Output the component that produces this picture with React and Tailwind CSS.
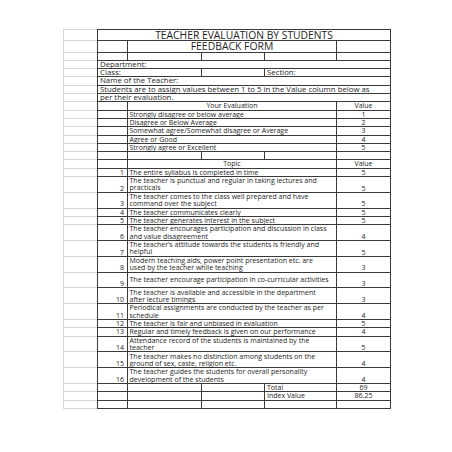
const items = [
  [1, ["The entire syllabus is completed in time"], 5],
  [2, ["The teacher is punctual and regular  in taking lectures and", "practicals"], 5],
  [3, ["The teacher comes to the class well prepared and have", "command over the subject"], 5],
  [4, ["The teacher communicates clearly"], 5],
  [5, ["The teacher generates interest in the subject"], 5],
  [6, ["The teacher encourages participation and discussion in class", "and value disagreement"], 4],
  [7, ["The teacher\u2019s attitude towards the students is friendly and", "helpful"], 5],
  [8, ["Modern teaching aids, power point presentation etc. are", "used by the teacher while teaching"], 3],
  [9, ["The teacher encourage participation in co-curricular activities"], 3, true],
  [10, ["The teacher is available and accessible in the department", "after lecture timings"], 3],
  [11, ["Periodical assignments are conducted by the teacher as per", "schedule"], 4],
  [12, ["The teacher is fair and unbiased in evaluation"], 5],
  [13, ["Regular and timely feedback is given on our performance"], 4],
  [14, ["Attendance record of the students is maintained by the", "teacher"], 5],
  [15, ["The teacher makes no distinction among students on the", "ground of sex, caste, religion etc."], 4],
  [16, ["The teacher guides the students for overall personality", "development of the students"], 4],
];

const scale = [
  ["Strongly disagree or below average", 1],
  ["Disagree or Below Average", 2],
  ["Somewhat agree/Somewhat disagree or Average", 3],
  ["Agree or Good", 4],
  ["Strongly agree or Excellent", 5],
];

// one spreadsheet row: light row-header cell + bordered table cells
function Row({ h, top, children }) {
  return (
    <div className={`flex shrink-0 ${h}`}>
      <div className={`w-[34px] shrink-0 border-l border-b border-[#d6d6d6] ${top ? "border-t" : ""}`} />
      <div className={`flex border-l border-[#3a3a3a] ${top ? "border-t" : ""}`}>{children}</div>
    </div>
  );
}

function Cell({ w, className = "", children }) {
  return (
    <div className={`${w} shrink-0 flex border-r border-b border-[#3a3a3a] whitespace-nowrap ${className}`}>
      {children}
    </div>
  );
}

function EmptyRow() {
  return (
    <Row h="h-[8.3px]">
      <Cell w="w-[30px]" />
      <Cell w="w-[74px]" />
      <Cell w="w-[63px]" />
      <Cell w="w-[72px]" />
      <Cell w="w-[54px]" />
    </Row>
  );
}

export default function App() {
  return (
    <div className="w-[452px] h-[452px] bg-white pl-[63px] pt-[29px] text-[#1e1e1e] text-[7px] leading-[7.3px] font-['Open_Sans',sans-serif]">
      <Row h="h-[11.8px]" top>
        <Cell w="w-[293px]" className="items-center justify-center text-[10.3px] leading-[10.8px]">
          TEACHER EVALUATION BY STUDENTS
        </Cell>
      </Row>
      <Row h="h-[11.8px]">
        <Cell w="w-[30px]" />
        <Cell w="w-[209px]" className="items-center justify-center text-[10.4px] leading-[10.8px]">
          FEEDBACK FORM
        </Cell>
        <Cell w="w-[54px]" />
      </Row>
      <EmptyRow />
      <Row h="h-[8.3px]">
        <Cell w="w-[293px]" className="items-end pl-[2px] text-[7.8px]">Department:</Cell>
      </Row>
      <Row h="h-[8.3px]">
        <Cell w="w-[104px]" className="items-end pl-[2px] text-[7.8px]">Class:</Cell>
        <Cell w="w-[63px]" />
        <Cell w="w-[126px]" className="items-end pl-[2px] text-[7.8px]">Section:</Cell>
      </Row>
      <Row h="h-[8.3px]">
        <Cell w="w-[293px]" className="items-end pl-[2px] text-[7.8px]">Name of the Teacher:</Cell>
      </Row>
      <Row h="h-[8.3px]">
        <Cell w="w-[293px]" className="items-end pl-[2px] text-[7.8px]">
          Students are to assign values between 1 to 5 in the Value column below as
        </Cell>
      </Row>
      <Row h="h-[8.3px]">
        <Cell w="w-[293px]" className="items-end pl-[2px] text-[7.8px]">per their evaluation.</Cell>
      </Row>
      <Row h="h-[8.3px]">
        <Cell w="w-[30px]" />
        <Cell w="w-[209px]" className="items-end justify-center">Your Evaluation</Cell>
        <Cell w="w-[54px]" className="items-end justify-center">Value</Cell>
      </Row>
      {scale.map(([label, v]) => (
        <Row key={v} h="h-[8.3px]">
          <Cell w="w-[30px]" />
          <Cell w="w-[209px]" className="items-end pl-[1.5px]">{label}</Cell>
          <Cell w="w-[54px]" className="items-end justify-center">{v}</Cell>
        </Row>
      ))}
      <EmptyRow />
      <Row h="h-[8.3px]">
        <Cell w="w-[30px]" />
        <Cell w="w-[209px]" className="items-end justify-center">Topic</Cell>
        <Cell w="w-[54px]" className="items-end justify-center">Value</Cell>
      </Row>
      {items.map(([n, lines, v, tall]) => (
        <Row key={n} h={lines.length > 1 || tall ? "h-[15.8px]" : "h-[8.3px]"}>
          <Cell w="w-[30px]" className="items-end justify-end pr-[3px]">{n}</Cell>
          <Cell w="w-[209px]" className="items-center pl-[1.5px]">
            <p>
              {lines[0]}
              {lines[1] && (
                <>
                  <br />
                  {lines[1]}
                </>
              )}
            </p>
          </Cell>
          <Cell w="w-[54px]" className="items-end justify-center">{v}</Cell>
        </Row>
      ))}
      <Row h="h-[8.3px]">
        <Cell w="w-[30px]" />
        <Cell w="w-[74px]" />
        <Cell w="w-[63px]" />
        <Cell w="w-[72px]" className="items-end pl-[2px]">Total</Cell>
        <Cell w="w-[54px]" className="items-end justify-center">69</Cell>
      </Row>
      <Row h="h-[8.3px]">
        <Cell w="w-[30px]" />
        <Cell w="w-[74px]" />
        <Cell w="w-[63px]" />
        <Cell w="w-[72px]" className="items-end pl-[2px]">Index Value</Cell>
        <Cell w="w-[54px]" className="items-end justify-center">86.25</Cell>
      </Row>
      <EmptyRow />
    </div>
  );
}
